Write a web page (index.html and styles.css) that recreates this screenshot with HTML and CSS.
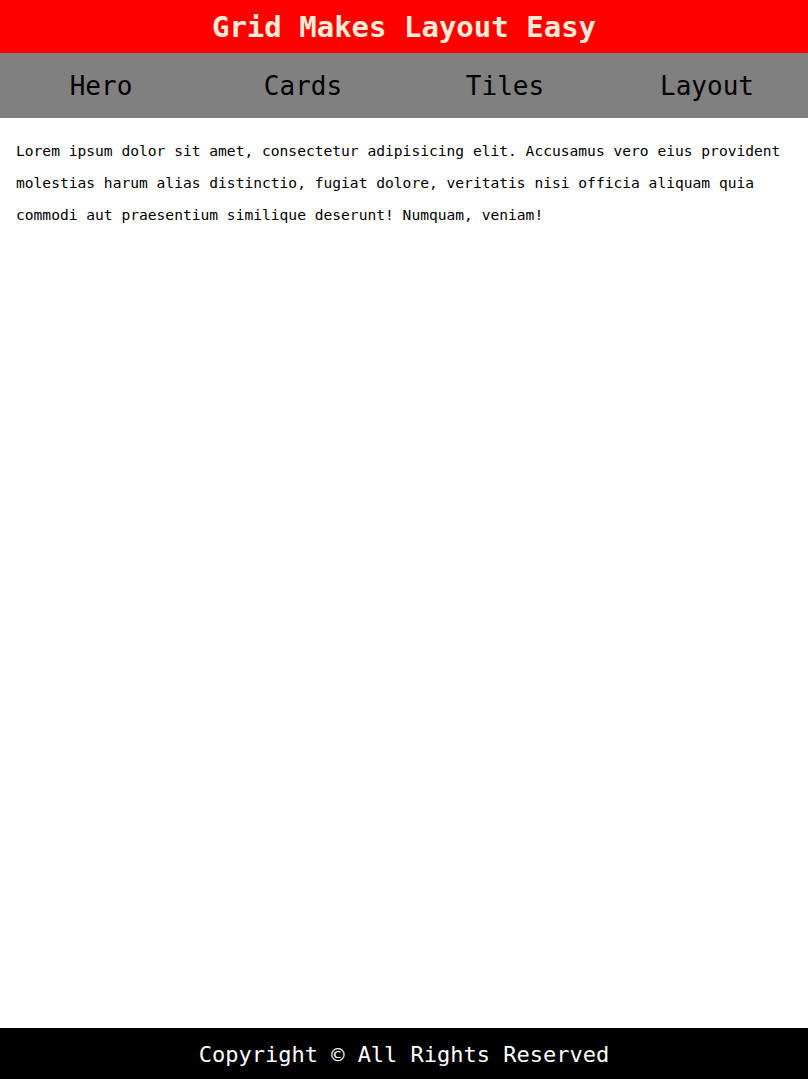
FILE: index.html
```html
<!DOCTYPE html>
<html lang="en">
<head>
<meta charset="utf-8">
<title>Grid Makes Layout Easy</title>
<link rel="stylesheet" href="styles.css">
</head>
<body>
<div class="page">
  <header class="site-header">
    <h1 class="site-title">Grid Makes Layout Easy</h1>
  </header>
  <nav class="site-nav">
    <a class="nav-link" href="#">Hero</a>
    <a class="nav-link" href="#">Cards</a>
    <a class="nav-link" href="#">Tiles</a>
    <a class="nav-link" href="#">Layout</a>
  </nav>
  <main class="content">
    <p class="intro">Lorem ipsum dolor sit amet, consectetur adipisicing elit. Accusamus vero eius provident molestias harum alias distinctio, fugiat dolore, veritatis nisi officia aliquam quia commodi aut praesentium similique deserunt! Numquam, veniam!</p>
  </main>
  <footer class="site-footer">
    <p class="copyright">Copyright © All Rights Reserved</p>
  </footer>
</div>
</body>
</html>
```

FILE: styles.css
```css
* {
  box-sizing: border-box;
}

html, body {
  margin: 0;
  padding: 0;
}

body {
  font-family: "DejaVu Sans Mono", "Liberation Mono", monospace;
  color: #000;
  background: #fff;
}

.page {
  display: grid;
  grid-template-rows: auto auto 1fr auto;
  min-height: 100vh;
}

.site-header {
  background: #ff0000;
  height: 53px;
  padding-top: 2px;
  display: flex;
  align-items: center;
  justify-content: center;
}

.site-title {
  margin: 0;
  font-size: 29px;
  font-weight: bold;
  line-height: 51px;
  color: #faebd7;
}

.site-nav {
  background: #808080;
  height: 65px;
  padding-top: 2px;
  display: grid;
  grid-template-columns: repeat(4, 1fr);
  align-items: center;
}

.nav-link {
  text-align: center;
  font-size: 26px;
  line-height: 63px;
  color: #000;
  text-decoration: none;
}

.content {
  padding: 17px 16px 16px;
}

.intro {
  margin: 0;
  font-size: 14.6px;
  line-height: 32px;
}

.site-footer {
  background: #000;
  height: 51px;
  padding-top: 2px;
  display: flex;
  align-items: center;
  justify-content: center;
}

.copyright {
  margin: 0;
  color: #fff;
  font-size: 22px;
  line-height: 49px;
}
```
